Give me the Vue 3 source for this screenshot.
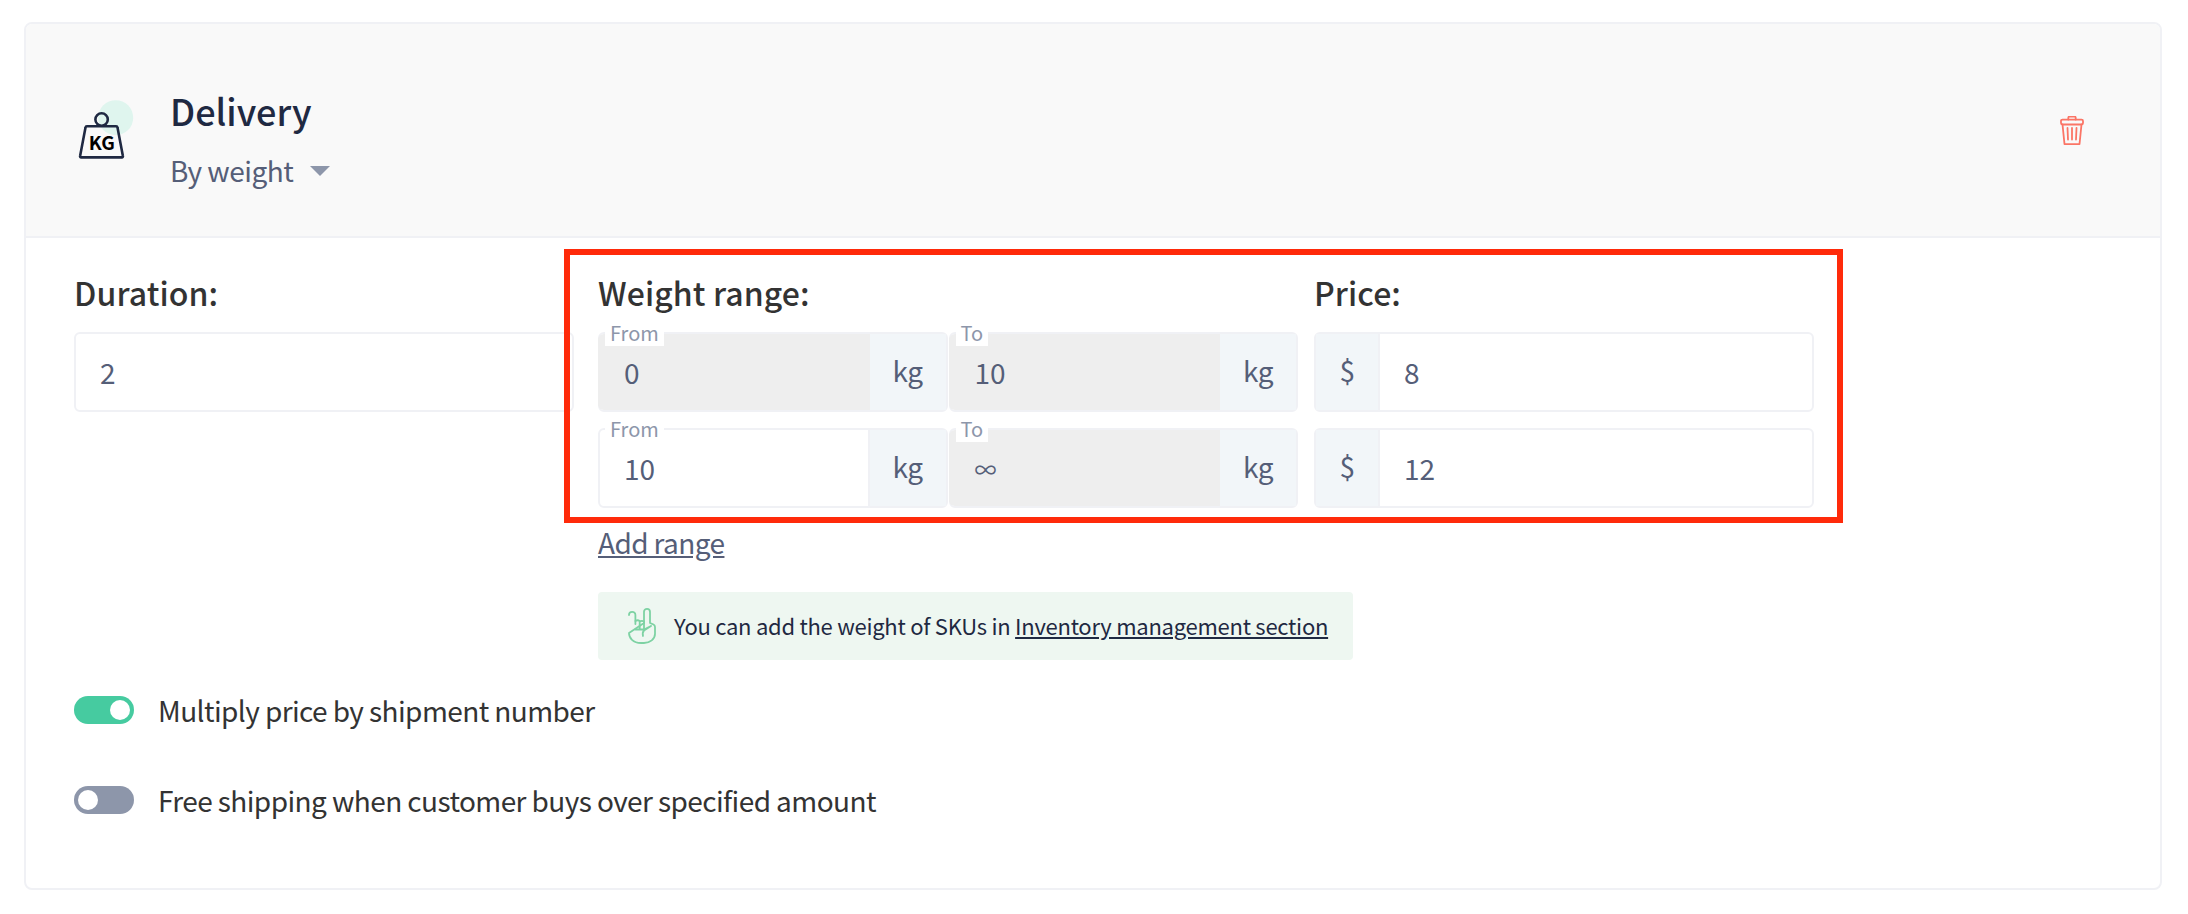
<script setup>
const rows = [
  { from: '0', fromLocked: true, to: '10', price: '8' },
  { from: '10', fromLocked: false, to: '∞', price: '12' },
]
</script>

<template>
  <div class="page">
    <section class="card">
      <header class="head">
        <svg class="kg" width="60" height="64" viewBox="0 0 60 64">
          <circle cx="39.700" cy="19.700" r="17.500" fill="#dff5ee" />
          <circle cx="25.600" cy="21.500" r="6.200" fill="none" stroke="#1f2942" stroke-width="2.600" />
          <path d="M11 28.300h29a1.500 1.500 0 0 1 1.500 1.300l5.400 28.500a1 1 0 0 1-1 1.300H5.100a1 1 0 0 1-1-1.300L9.500 29.600A1.500 1.500 0 0 1 11 28.300z" fill="none" stroke="#1f2942" stroke-width="2.600" stroke-linejoin="round" />
          <text x="25.800" y="51.500" text-anchor="middle" class="kg-text">KG</text>
        </svg>
        <div class="head-text">
          <h1 class="title">Delivery</h1>
          <div class="type">By weight<span class="caret"></span></div>
        </div>
        <svg class="trash" width="24" height="30" viewBox="0 0 24 30" fill="none" stroke="#fb7566" stroke-width="1.800" stroke-linejoin="round" stroke-linecap="round">
          <path d="M8.300 3.500V1.800a1.200 1.200 0 0 1 1.200-1.200h5a1.200 1.200 0 0 1 1.200 1.200v1.700" />
          <rect x="1" y="3.600" width="22" height="4.900" rx="1.400" />
          <path d="M2.500 8.500 4.500 28.200h15l2-19.700" />
          <path d="M7.500 12l.5 11.500M12 12v11.500M16.500 12 16 23.500" />
        </svg>
      </header>

      <div class="body">
        <div class="fields">
          <div class="col-duration">
            <div class="label">Duration:</div>
            <div class="group"><div class="value">2</div></div>
          </div>
          <div class="col-range">
            <div class="label">Weight range:</div>
            <div v-for="r in rows" :key="r.from" class="range-row">
              <div class="group">
                <span class="float">From</span>
                <div class="value" :class="r.fromLocked ? 'locked' : 'divided'">{{ r.from }}</div>
                <div class="addon">kg</div>
              </div>
              <div class="group">
                <span class="float">To</span>
                <div class="value locked" :class="{ infinity: r.to === '∞' }">{{ r.to }}</div>
                <div class="addon">kg</div>
              </div>
            </div>
          </div>
          <div class="col-price">
            <div class="label">Price:</div>
            <div v-for="r in rows" :key="r.price" class="group price-row">
              <div class="addon addon-left">$</div>
              <div class="value">{{ r.price }}</div>
            </div>
          </div>
        </div>

        <div class="under">
          <a class="add">Add range</a>
          <div class="info">
            <svg class="hand" width="30" height="38" viewBox="0 0 30 38" fill="none" stroke="#7dd2a3" stroke-width="1.800" stroke-linecap="round" stroke-linejoin="round">
              <path d="M2 8a3.200 3.200 0 0 1 6.400 0v9M17 16V4.800a3 3 0 0 1 6 0V16l3.500 1.500c1 .5 1.500 1.200 1.500 2.500v7c0 5-5 9-11 9h-3C6 36 2 31 2 26z" />
              <path d="M8.400 14c1.500-1 3-1 4.300 0v8M12.700 14.500c1.400-.8 3-.8 4.300 0V22" />
              <path d="M8.400 22.500H17l7-3.500M24 19l-7 4.500c-1.500 1.500-1.500 3.500-1 5.500" />
            </svg>
            <span class="info-text">You can add the weight of SKUs in <a class="link">Inventory management section</a></span>
          </div>
        </div>

        <div class="toggle-row first">
          <span class="toggle on"><span class="knob"></span></span>
          <span>Multiply price by shipment number</span>
        </div>
        <div class="toggle-row">
          <span class="toggle"><span class="knob"></span></span>
          <span>Free shipping when customer buys over specified amount</span>
        </div>

        <div class="marker"></div>
      </div>
    </section>
  </div>
</template>

<style scoped>
.page {
  width: 2188px;
  height: 914px;
  box-sizing: border-box;
  padding: 22px 0 0 24px;
  background: #fff;
  font-family: "Noto Sans CJK SC", "Noto Sans", sans-serif;
  color: #333;
}
.card {
  width: 2138px;
  height: 868px;
  box-sizing: border-box;
  border: 2px solid #f0f1f5;
  border-radius: 8px;
  overflow: hidden;
}
.head {
  height: 214px;
  box-sizing: border-box;
  border-bottom: 2px solid #f0f1f5;
  background: #f9f9f9;
  display: flex;
  align-items: center;
  padding: 0 76px 0 50px;
}
.kg { flex: none; margin-right: 34px; }
.kg-text { font-size: 19px; font-weight: 700; fill: #000; font-family: "Noto Sans CJK SC", sans-serif; }
.head-text { flex: 1; margin-top: 16px; }
.title {
  margin: 0 0 17px;
  font-size: 36px;
  line-height: 46px;
  font-weight: 500;
  color: #1f2942;
}
.type {
  font-size: 28px;
  line-height: 40px;
  letter-spacing: -0.5px;
  color: #555e78;
  display: flex;
  align-items: center;
}
.caret {
  width: 0;
  height: 0;
  margin: 2px 0 0 17px;
  border-left: 10px solid transparent;
  border-right: 10px solid transparent;
  border-top: 10px solid #8d96aa;
}
.trash { flex: none; margin-top: 2px; }
.body {
  position: relative;
  padding: 0 48px;
}
.fields { display: flex; }
.col-duration { width: 500px; margin-right: 24px; }
.col-range { width: 700px; margin-right: 16px; }
.col-price { width: 500px; }
.label {
  height: 94px;
  box-sizing: border-box;
  padding-top: 33px;
  font-size: 32px;
  line-height: 42px;
  font-weight: 500;
  letter-spacing: 0.1px;
  color: #333;
}
.group {
  position: relative;
  display: flex;
  height: 80px;
  box-sizing: border-box;
  border: 2px solid #f0f1f5;
  border-radius: 6px;
  flex: 1;
  min-width: 0;
}
.range-row { display: flex; height: 80px; margin-bottom: 16px; gap: 1px; }
.price-row { margin-bottom: 16px; }
.value {
  flex: 1;
  min-width: 0;
  padding-left: 24px;
  font-size: 28px;
  line-height: 76px;
  color: #555e78;
}
.locked {
  background: #eeeeee;
  margin-left: -2px;
  padding-left: 26px;
  border-radius: 6px 0 0 6px;
}
.divided { border-right: 2px solid #f0f1f5; }
.infinity { font-size: 22px; }
.addon {
  flex: none;
  width: 76px;
  text-align: center;
  font-size: 28px;
  line-height: 72px;
  letter-spacing: -0.5px;
  background: #f2f6f9;
  color: #555e78;
}
.addon-left {
  width: 64px;
  box-sizing: border-box;
  border-right: 2px solid #f0f1f5;
}
.float {
  position: absolute;
  left: 5px;
  top: -10px;
  padding: 0 5px;
  height: 22px;
  background: #fff;
  font-size: 20px;
  line-height: 17px;
  color: #8d96aa;
}
.under { margin-left: 524px; margin-top: -1px; }
.add {
  display: block;
  font-size: 28px;
  line-height: 38px;
  letter-spacing: -0.6px;
  color: #555e78;
  text-decoration: underline;
}
.info {
  margin-top: 31px;
  width: 755px;
  height: 68px;
  border-radius: 4px;
  background: #eef7f1;
  display: flex;
  align-items: center;
  box-sizing: border-box;
  padding-left: 29px;
  gap: 17px;
  font-size: 22px;
  letter-spacing: -0.26px;
  color: #1f2942;
}
.info-text { white-space: nowrap; margin-top: -2px; }
.link { text-decoration: underline; }
.toggle-row {
  display: flex;
  align-items: center;
  gap: 24px;
  height: 28px;
  margin-top: 62px;
  font-size: 28px;
  letter-spacing: -0.58px;
  color: #333;
}
.toggle-row.first { margin-top: 36px; }
.toggle {
  flex: none;
  width: 60px;
  height: 28px;
  border-radius: 14px;
  background: #8d96aa;
  display: flex;
  align-items: center;
  padding: 0 4px;
  box-sizing: border-box;
}
.toggle.on { background: #46cba0; justify-content: flex-end; }
.knob { width: 20px; height: 20px; border-radius: 50%; background: #fff; }
.marker {
  position: absolute;
  left: 538px;
  top: 11px;
  width: 1279px;
  height: 274px;
  box-sizing: border-box;
  border: 6px solid #ff2a0a;
  pointer-events: none;
}
</style>

<style>
html, body { margin: 0; background: #fff; }
</style>
